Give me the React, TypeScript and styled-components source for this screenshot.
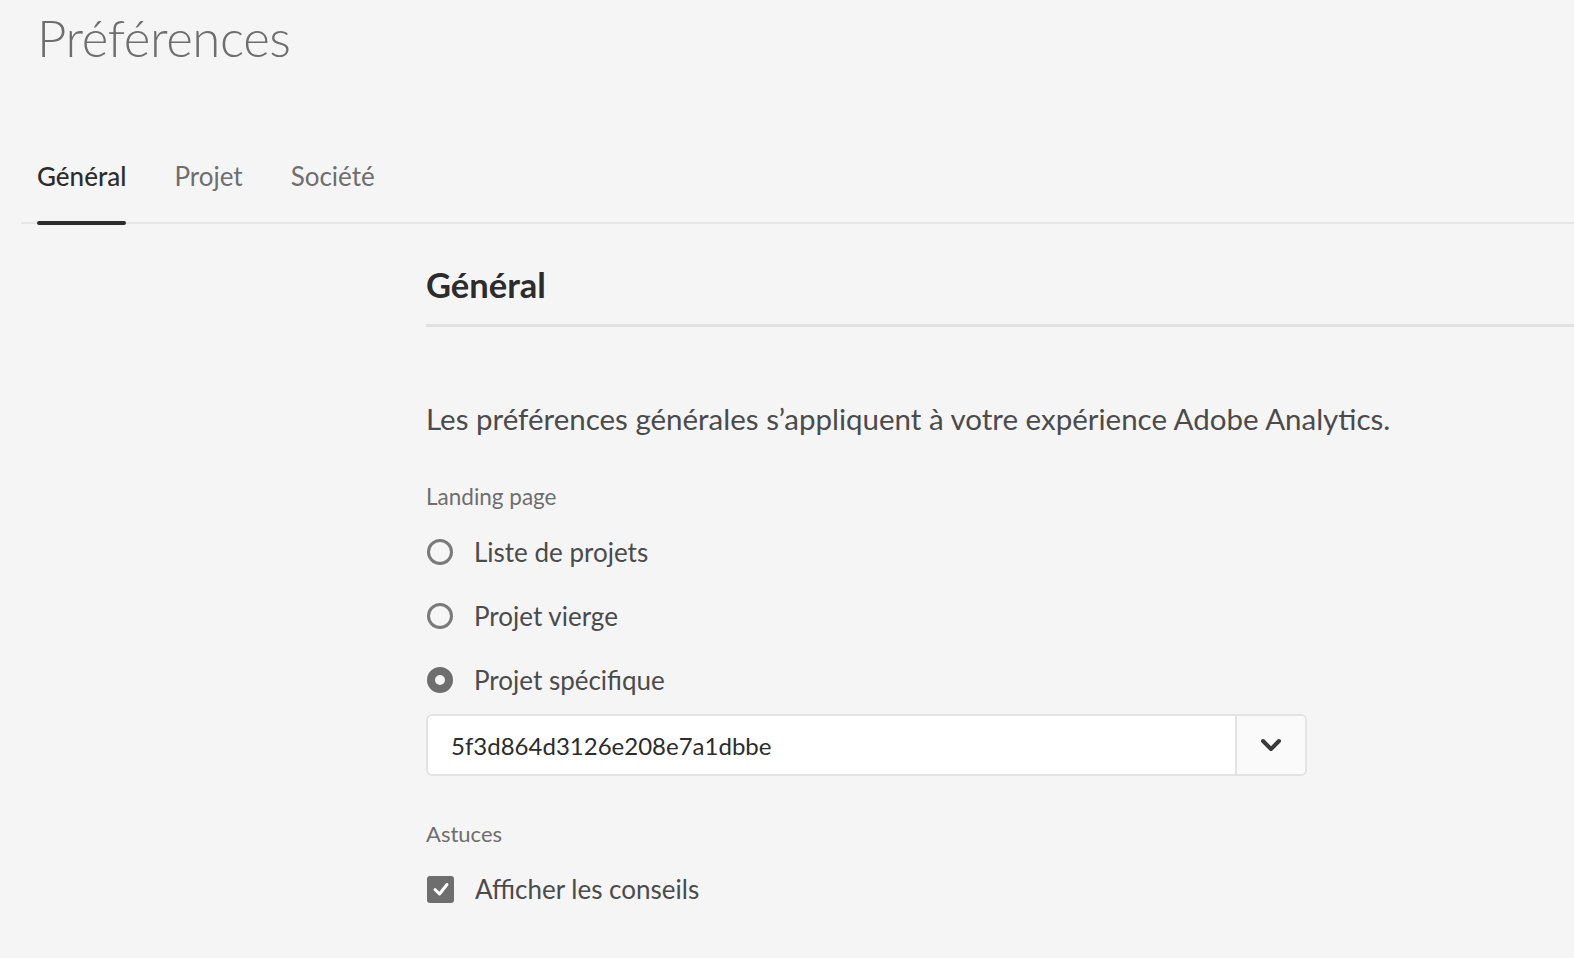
import React from "react";
import styled, { createGlobalStyle } from "styled-components";

const Global = createGlobalStyle`
  html, body { margin: 0; padding: 0; background: #f5f5f5; }
  body { font-family: Lato, "Open Sans", sans-serif; color: #4b4b4b; }
  * { box-sizing: border-box; }
`;

const Page = styled.div`
  width: 1574px;
  height: 958px;
  overflow: hidden;
  background: #f5f5f5;
  display: flex;
  flex-direction: column;
`;

const Title = styled.h1`
  margin: 0;
  padding: 6px 0 0 37px;
  height: 76px;
  font-size: 51px;
  font-weight: 300;
  color: #6e6e6e;
  line-height: 64px;
  letter-spacing: -0.4px;
`;

const TabBar = styled.div`
  margin: 76px 0 0 21px;
  display: flex;
  gap: 48px;
  padding-left: 16px;
  border-bottom: 2px solid #e6e6e6;
  height: 72px;
`;

const Tab = styled.div<{ $active?: boolean }>`
  position: relative;
  font-size: 26px;
  line-height: 40px;
  padding-top: 4px;
  color: ${(p) => (p.$active ? "#2c2c2c" : "#6e6e6e")};
  font-weight: ${(p) => (p.$active ? 500 : 400)};
  ${(p) =>
    p.$active &&
    `&::after {
      content: "";
      position: absolute;
      left: 0; right: 0; bottom: -3px;
      height: 4px;
      border-radius: 2px;
      background: #2c2c2c;
    }`}
`;

const Content = styled.div`
  margin-left: 426px;
  display: flex;
  flex-direction: column;
`;

const Heading = styled.h2`
  margin: 0;
  padding-top: 40px;
  font-size: 34.5px;
  font-weight: 700;
  color: #2c2c2c;
  line-height: 42px;
  padding-bottom: 18px;
  border-bottom: 3px solid #e1e1e1;
`;

const Intro = styled.p`
  margin: 72px 0 0;
  font-size: 29.5px;
  line-height: 40px;
  color: #4b4b4b;
`;

const FieldLabel = styled.div<{ $top: number; $size: number }>`
  margin-top: ${(p) => p.$top}px;
  font-size: ${(p) => p.$size}px;
  line-height: 30px;
  color: #6e6e6e;
`;

const OptionList = styled.div`
  display: flex;
  flex-direction: column;
  margin-top: 20px;
  gap: 24px;
`;

const Option = styled.label`
  display: flex;
  align-items: center;
  gap: 21px;
  height: 40px;
  font-size: 26px;
  color: #4b4b4b;
  padding-left: 1px;
`;

const Radio = styled.span<{ $checked?: boolean }>`
  width: 26px;
  height: 26px;
  border-radius: 50%;
  flex: none;
  border: ${(p) => (p.$checked ? "8px solid #6e6e6e" : "3px solid #7a7a7a")};
  background: #f5f5f5;
`;

const Check = styled.span`
  width: 27px;
  height: 27px;
  border-radius: 3px;
  background: #6e6e6e;
  flex: none;
  display: flex;
  align-items: center;
  justify-content: center;
`;

const Select = styled.div`
  margin-top: 14px;
  width: 881px;
  height: 62px;
  display: flex;
  border: 2px solid #e3e3e3;
  border-radius: 6px;
  background: #ffffff;
  overflow: hidden;
`;

const SelectValue = styled.div`
  flex: 1;
  display: flex;
  align-items: center;
  padding-left: 23px;
  font-size: 24px;
  color: #2c2c2c;
`;

const SelectButton = styled.div`
  width: 70px;
  border-left: 2px solid #e3e3e3;
  background: #fafafa;
  display: flex;
  align-items: center;
  justify-content: center;
`;

export default function App() {
  return (
    <Page>
      <Global />
      <Title>Préférences</Title>
      <TabBar>
        <Tab $active>Général</Tab>
        <Tab>Projet</Tab>
        <Tab>Société</Tab>
      </TabBar>
      <Content>
        <Heading>Général</Heading>
        <Intro>Les préférences générales s’appliquent à votre expérience Adobe Analytics.</Intro>
        <FieldLabel $top={43} $size={22.5}>Landing page</FieldLabel>
        <OptionList>
          <Option>
            <Radio />
            Liste de projets
          </Option>
          <Option>
            <Radio />
            Projet vierge
          </Option>
          <Option>
            <Radio $checked />
            Projet spécifique
          </Option>
        </OptionList>
        <Select>
          <SelectValue>5f3d864d3126e208e7a1dbbe</SelectValue>
          <SelectButton>
            <svg width="22" height="14" viewBox="0 0 22 14">
              <path d="M3 3 L11 11 L19 3" fill="none" stroke="#3a3a3a" strokeWidth="4" strokeLinecap="round" strokeLinejoin="round" />
            </svg>
          </SelectButton>
        </Select>
        <FieldLabel $top={43} $size={22}>Astuces</FieldLabel>
        <OptionList>
          <Option>
            <Check>
              <svg width="20" height="20" viewBox="0 0 20 20">
                <path d="M4 10.5 L8.5 15 L16 5.5" fill="none" stroke="#fff" strokeWidth="3" strokeLinecap="round" strokeLinejoin="round" />
              </svg>
            </Check>
            Afficher les conseils
          </Option>
        </OptionList>
      </Content>
    </Page>
  );
}
